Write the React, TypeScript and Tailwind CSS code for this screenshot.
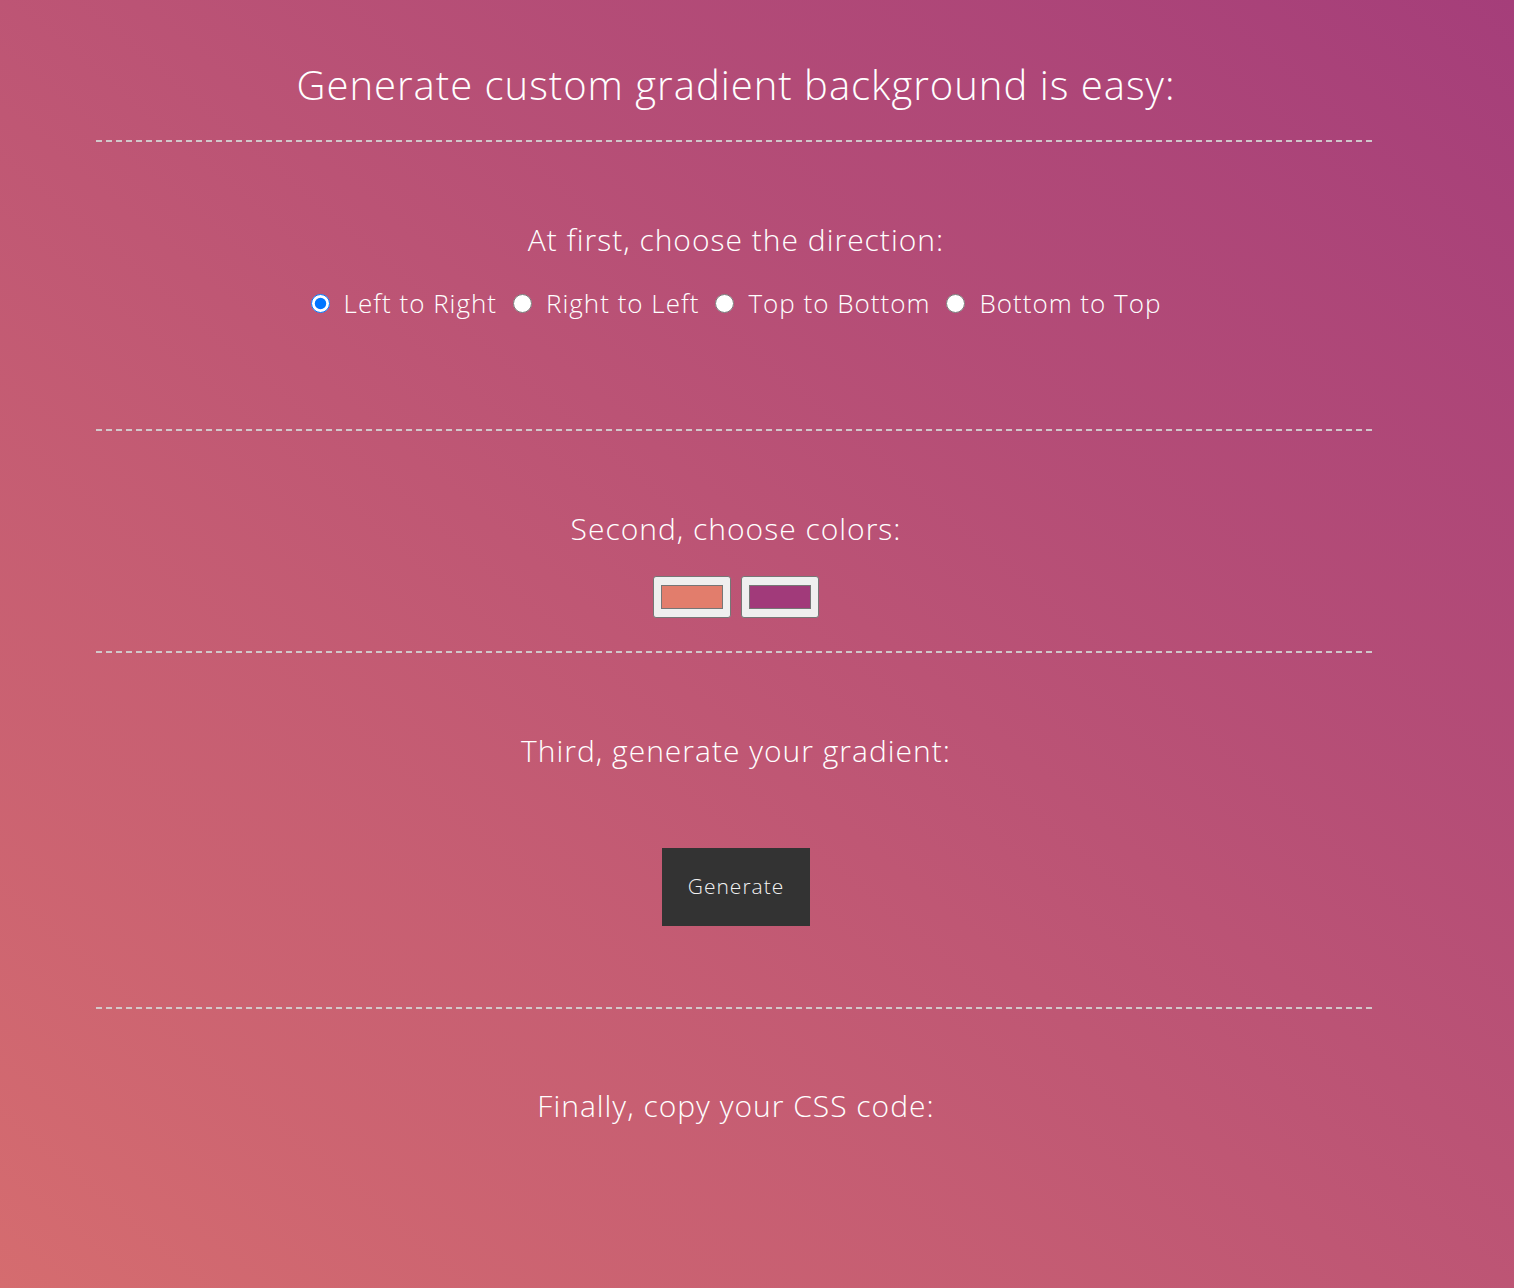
import React, { useState } from 'react'

const directions = ['Left to Right', 'Right to Left', 'Top to Bottom', 'Bottom to Top']

const Divider = () => (
	<div className="w-full h-[2px] bg-[repeating-linear-gradient(to_right,#d4d4d4_0px,#d4d4d4_6px,transparent_6px,transparent_10px)] opacity-90" />
)

const Swatch = ({ color }: { color: string }) => (
	<div className="w-[78px] h-[42px] bg-[#efefef] border border-[#767676] rounded-[3px] px-[7px] py-[8px]">
		<div className="w-full h-full border border-[#767676]" style={{ backgroundColor: color }} />
	</div>
)

const App = () => {
	const [dir, setDir] = useState('Left to Right')

	return (
		<main className="min-h-screen w-full bg-[linear-gradient(to_top_right,#d56c6f,#a53e7a)] font-['Open_Sans',sans-serif] font-light text-white">
			<div className="ml-[96px] w-[1280px] pt-[61px] pb-[160px] flex flex-col items-center">
				<h1 className="text-[40px] leading-[48px] tracking-[1px] mb-[31px]">Generate custom gradient background is easy:</h1>
				<Divider />

				<h2 className="mt-[80px] text-[30px] leading-[36px] tracking-[1px]">At first, choose the direction:</h2>
				<div className="mt-[30px] h-[30px] flex items-center text-[26px] tracking-[1px]">
					{directions.map((d) => (
						<label key={d} className="flex items-center ml-[16px] first:ml-0">
							<input
								type="radio"
								name="direction"
								checked={dir === d}
								onChange={() => setDir(d)}
								className="w-[19px] h-[19px] m-0 mr-[14px]"
							/>
							<span>{d}</span>
						</label>
					))}
				</div>
				<div className="h-[111px]" />
				<Divider />

				<h2 className="mt-[80px] text-[30px] leading-[36px] tracking-[1px]">Second, choose colors:</h2>
				<div className="mt-[29px] flex gap-[10px]">
					<Swatch color="#e27d6c" />
					<Swatch color="#a13a7a" />
				</div>
				<div className="h-[33px]" />
				<Divider />

				<h2 className="mt-[80px] text-[30px] leading-[36px] tracking-[1px]">Third, generate your gradient:</h2>
				<button className="mt-[79px] w-[148px] h-[78px] bg-[#333333] text-[21px] tracking-[1px] text-[#f2f2f2]">Generate</button>
				<div className="h-[81px]" />
				<Divider />

				<h2 className="mt-[79px] text-[30px] leading-[36px] tracking-[1px]">Finally, copy your CSS code:</h2>
			</div>
		</main>
	)
}

export default App
